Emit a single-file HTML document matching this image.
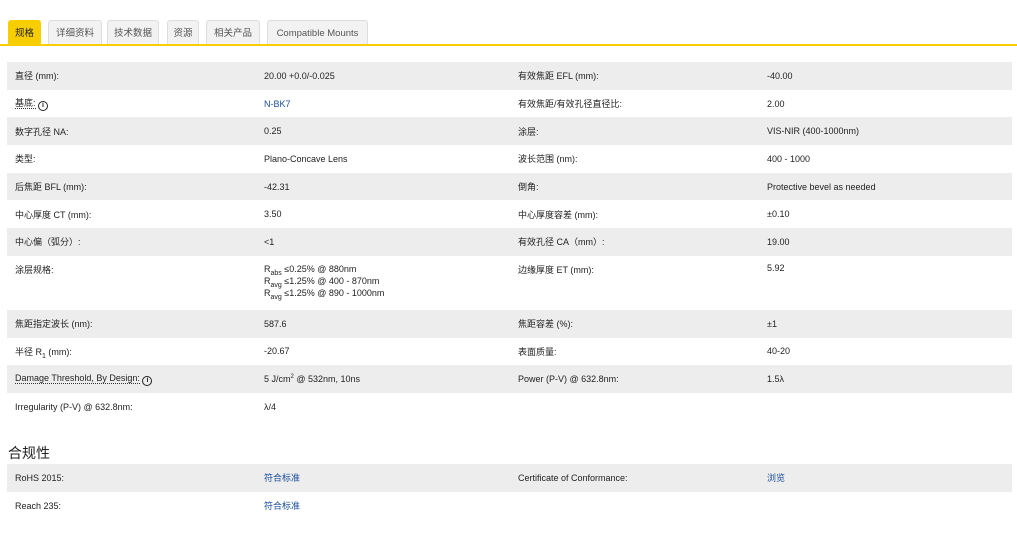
<!DOCTYPE html>
<html><head><meta charset="utf-8"><style>
*{margin:0;padding:0;box-sizing:border-box}
body{width:1017px;height:533px;background:#fff;font-family:"Liberation Sans","Noto Sans CJK SC",sans-serif;font-size:9.5px;color:#222;position:relative;overflow:hidden}
.tab{position:absolute;top:20px;height:25px;background:#f2f2f2;border:1px solid #ddd;border-bottom:none;border-radius:3px 3px 0 0;font-size:9.5px;color:#555;text-align:center;line-height:25px}
.tab.on{background:#f7cf00;border-color:#f7cf00;color:#222}
.line{position:absolute;top:44px;left:0;width:1017px;height:2px;background:#f7cf00}
table{position:absolute;left:7px;width:1005px;border-collapse:collapse}
td{height:27.7px;vertical-align:middle;padding-left:8px;font-size:9px}
tr:nth-child(odd) td{background:#ededed}
td.c1{width:249px}td.c2{width:254px}td.c3{width:249px}
a{color:#1a4f9c;text-decoration:none}
.u{border-bottom:1px dotted #333}
.i{display:inline-block;width:10px;height:10px;border:1.5px solid #222;border-radius:50%;font-size:7px;line-height:7px;text-align:center;font-weight:bold;vertical-align:-1px}
sub{font-size:7px;line-height:0}
h3{position:absolute;left:8px;top:443px;font-size:14px;font-weight:normal;color:#222}
</style></head><body>
<div class="tab on" style="left:8px;width:33px">规格</div>
<div class="tab" style="left:48px;width:54px">详细资料</div>
<div class="tab" style="left:107px;width:52px">技术数据</div>
<div class="tab" style="left:167px;width:32px">资源</div>
<div class="tab" style="left:206px;width:54px">相关产品</div>
<div class="tab" style="left:267px;width:101px">Compatible Mounts</div>
<div class="line"></div>
<table style="top:62px">
<tr><td class="c1">直径 (mm):</td><td class="c2">20.00 +0.0/-0.025</td><td class="c3">有效焦距 EFL (mm):</td><td>-40.00</td></tr>
<tr><td><span class="u">基底:</span> <span class="i">i</span></td><td><a>N-BK7</a></td><td>有效焦距/有效孔径直径比:</td><td>2.00</td></tr>
<tr><td>数字孔径 NA:</td><td>0.25</td><td>涂层:</td><td>VIS-NIR (400-1000nm)</td></tr>
<tr><td>类型:</td><td>Plano-Concave Lens</td><td>波长范围 (nm):</td><td>400 - 1000</td></tr>
<tr><td>后焦距 BFL (mm):</td><td>-42.31</td><td>倒角:</td><td>Protective bevel as needed</td></tr>
<tr><td>中心厚度 CT (mm):</td><td>3.50</td><td>中心厚度容差 (mm):</td><td>±0.10</td></tr>
<tr><td>中心偏（弧分）:</td><td>&lt;1</td><td>有效孔径 CA（mm）:</td><td>19.00</td></tr>
<tr><td style="height:54px;vertical-align:top;padding-top:7px">涂层规格:</td><td style="vertical-align:top;padding-top:7px;line-height:12px">R<sub>abs</sub> ≤0.25% @ 880nm<br>R<sub>avg</sub> ≤1.25% @ 400 - 870nm<br>R<sub>avg</sub> ≤1.25% @ 890 - 1000nm</td><td style="vertical-align:top;padding-top:7px">边缘厚度 ET (mm):</td><td style="vertical-align:top;padding-top:7px">5.92</td></tr>
<tr><td>焦距指定波长 (nm):</td><td>587.6</td><td>焦距容差 (%):</td><td>±1</td></tr>
<tr><td>半径 R<sub>1</sub> (mm):</td><td>-20.67</td><td>表面质量:</td><td>40-20</td></tr>
<tr><td><span class="u">Damage Threshold, By Design:</span> <span class="i">i</span></td><td>5 J/cm<sup style="font-size:6px;line-height:0">2</sup> @ 532nm, 10ns</td><td>Power (P-V) @ 632.8nm:</td><td>1.5λ</td></tr>
<tr><td style="background:#fff">Irregularity (P-V) @ 632.8nm:</td><td style="background:#fff">λ/4</td><td style="background:#fff"></td><td style="background:#fff"></td></tr>
</table>
<h3>合规性</h3>
<table style="top:464px">
<tr><td class="c1">RoHS 2015:</td><td class="c2"><a>符合标准</a></td><td class="c3">Certificate of Conformance:</td><td><a>浏览</a></td></tr>
<tr><td>Reach 235:</td><td><a>符合标准</a></td><td></td><td></td></tr>
</table>
</body></html>
